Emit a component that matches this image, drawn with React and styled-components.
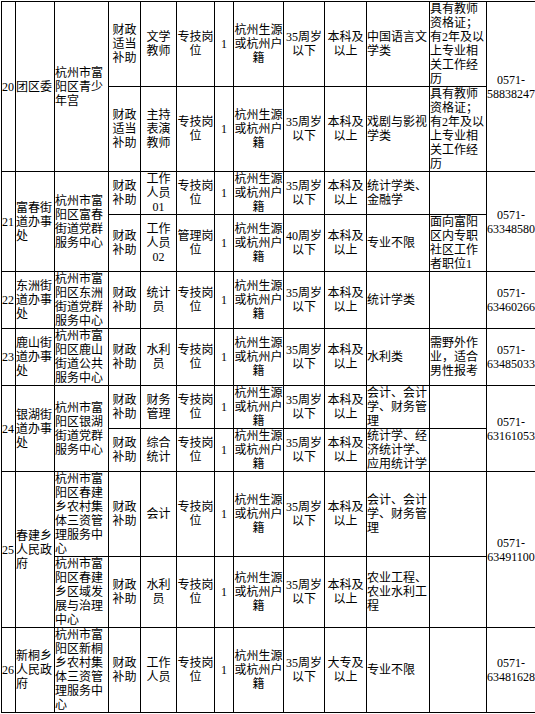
import React from "react";
import styled, { createGlobalStyle } from "styled-components";

const GlobalStyle = createGlobalStyle`
  html, body {
    margin: 0;
    padding: 0;
    background: #fff;
    overflow: hidden;
  }
`;

// column pitch, line to line (each cell carries its own right border)
const COLS = [14, 39, 54, 32, 36, 38, 19, 50, 41, 42, 63, 57, 49];

const Sheet = styled.div`
  padding: 1px 0 0 1px;
  width: 560px;
`;

const Table = styled.table`
  border-collapse: separate;
  border-spacing: 0;
  table-layout: fixed;
  width: ${COLS.reduce((a, b) => a + b, 0) + 1}px;
  border-top: 1px solid #000;
  border-left: 1px solid #000;
  font-family: "Liberation Serif", "Noto Sans CJK SC", serif;
  font-size: 12px;
  line-height: 14px;
  color: #000;
`;

const Cell = styled.td`
  box-sizing: border-box;
  border-right: 1px solid #000;
  border-bottom: 1px solid #000;
  padding: ${({ $tight }) => ($tight ? "0 1px" : "0")};
  vertical-align: middle;
  text-align: ${({ $align }) => $align || "center"};
  white-space: normal;
  overflow: visible;
`;

const Phone = styled.span`
  display: block;
  white-space: nowrap;
`;

const HUKOU = "杭州生源或杭州户籍";

// shorthand cell makers
const L = (t, rs) => ({ t, rs, a: "left" });
const P = (t, rs) => ({ t, rs, phone: true });

const std = (fund, post, kind, age, edu) => [
  fund,
  { t: post, tight: true },
  kind,
  "1",
  HUKOU,
  age,
  edu,
];

const rows = [
  [
    L("20", 2),
    L("团区委", 2),
    L("杭州市富阳区青少年宫", 2),
    ...std("财政适当补助", "文学教师", "专技岗位", "35周岁以下", "本科及以上"),
    L("中国语言文学类"),
    L("具有教师资格证；有2年及以上专业相关工作经历"),
    P("0571-58838247", 2),
  ],
  [
    ...std("财政适当补助", "主持表演教师", "专技岗位", "35周岁以下", "本科及以上"),
    L("戏剧与影视学类"),
    L("具有教师资格证；有2年及以上专业相关工作经历"),
  ],
  [
    L("21", 2),
    L("富春街道办事处", 2),
    L("杭州市富阳区富春街道党群服务中心", 2),
    ...std("财政补助", "工作人员01", "专技岗位", "35周岁以下", "本科及以上"),
    L("统计学类、金融学"),
    L(""),
    P("0571-63348580", 2),
  ],
  [
    ...std("财政补助", "工作人员02", "管理岗位", "40周岁以下", "本科及以上"),
    L("专业不限"),
    L("面向富阳区内专职社区工作者职位1"),
  ],
  [
    L("22"),
    L("东洲街道办事处"),
    L("杭州市富阳区东洲街道党群服务中心"),
    ...std("财政补助", "统计员", "专技岗位", "35周岁以下", "本科及以上"),
    L("统计学类"),
    L(""),
    P("0571-63460266"),
  ],
  [
    L("23"),
    L("鹿山街道办事处"),
    L("杭州市富阳区鹿山街道公共服务中心"),
    ...std("财政补助", "水利员", "专技岗位", "35周岁以下", "本科及以上"),
    L("水利类"),
    L("需野外作业，适合男性报考"),
    P("0571-63485033"),
  ],
  [
    L("24", 2),
    L("银湖街道办事处", 2),
    L("杭州市富阳区银湖街道党群服务中心", 2),
    ...std("财政补助", "财务管理", "专技岗位", "35周岁以下", "本科及以上"),
    L("会计、会计学、财务管理"),
    L(""),
    P("0571-63161053", 2),
  ],
  [
    ...std("财政补助", "综合统计", "专技岗位", "35周岁以下", "本科及以上"),
    L("统计学、经济统计学、应用统计学"),
    L(""),
  ],
  [
    L("25", 2),
    L("春建乡人民政府", 2),
    L("杭州市富阳区春建乡农村集体三资管理服务中心"),
    ...std("财政补助", "会计", "专技岗位", "35周岁以下", "本科及以上"),
    L("会计、会计学、财务管理"),
    L(""),
    P("0571-63491100", 2),
  ],
  [
    L("杭州市富阳区春建乡区域发展与治理中心"),
    ...std("财政补助", "水利员", "专技岗位", "35周岁以下", "本科及以上"),
    L("农业工程、农业水利工程"),
    L(""),
  ],
  [
    L("26"),
    L("新桐乡人民政府"),
    L("杭州市富阳区新桐乡农村集体三资管理服务中心"),
    ...std("财政补助", "工作人员", "专技岗位", "35周岁以下", "大专及以上"),
    L("专业不限"),
    L(""),
    P("0571-63481628"),
  ],
];

const renderCell = (c, i) => {
  const cell = typeof c === "string" ? { t: c } : c;
  let body = cell.t;
  if (cell.phone) {
    const [area, num] = cell.t.split("-");
    body = (
      <>
        <Phone>{area}-</Phone>
        <Phone>{num}</Phone>
      </>
    );
  }
  return (
    <Cell key={i} rowSpan={cell.rs} $align={cell.a} $tight={cell.tight}>
      {body}
    </Cell>
  );
};

export default function App() {
  return (
    <>
      <GlobalStyle />
      <Sheet>
        <Table>
          <colgroup>
            {COLS.map((w, i) => (
              <col key={i} style={{ width: w }} />
            ))}
          </colgroup>
          <tbody>
            {rows.map((r, i) => (
              <tr key={i}>{r.map(renderCell)}</tr>
            ))}
          </tbody>
        </Table>
      </Sheet>
    </>
  );
}
